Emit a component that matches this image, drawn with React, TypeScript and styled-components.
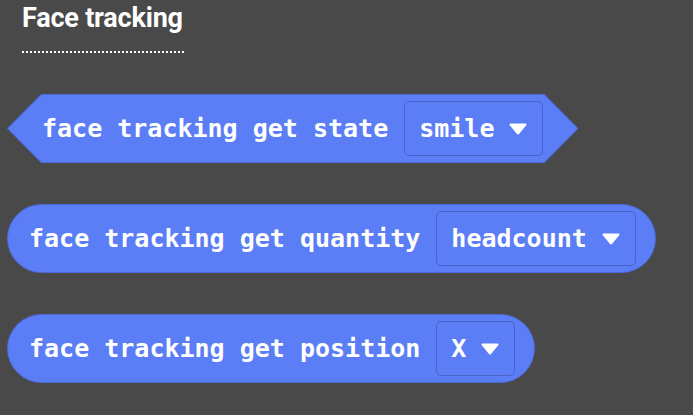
import React from "react";
import styled, { createGlobalStyle } from "styled-components";

const Global = createGlobalStyle`
  html, body { margin: 0; padding: 0; background: #4a4949; }
  body { width: 693px; height: 415px; overflow: hidden; }
`;

const Page = styled.div`
  display: flex;
  flex-direction: column;
  align-items: flex-start;
  padding: 2px 0 0 7px;
  box-sizing: border-box;
  width: 693px;
  height: 415px;
`;

const Heading = styled.div`
  margin-left: 15px;
  display: flex;
  flex-direction: column;
  align-items: flex-start;
`;

const Title = styled.h2`
  margin: 0;
  font-family: Roboto, "Noto Sans", sans-serif;
  font-weight: 700;
  font-size: 27px;
  line-height: 32px;
  color: #ffffff;
  letter-spacing: -0.2px;
`;

const Dots = styled.div`
  margin-top: 17px;
  width: 162px;
  height: 2px;
  background: repeating-linear-gradient(90deg, #ffffff 0 2px, transparent 2px 4px);
`;

const Stack = styled.div`
  display: flex;
  flex-direction: column;
  align-items: flex-start;
  gap: 41px;
  margin-top: 41px;
`;

const blockText = `
  font-family: "DejaVu Sans Mono", "Liberation Mono", monospace;
  font-weight: 700;
  font-size: 25px;
  color: #ffffff;
  white-space: pre;
`;

const HexOuter = styled.div`
  background: #4d69d6;
  clip-path: polygon(34px 0, calc(100% - 34px) 0, 100% 50%, calc(100% - 34px) 100%, 34px 100%, 0 50%);
  padding: 1px;
`;

const HexInner = styled.div`
  background: #5b7df5;
  clip-path: polygon(33.6px 0, calc(100% - 33.6px) 0, 100% 50%, calc(100% - 33.6px) 100%, 33.6px 100%, 0 50%);
  height: 67px;
  display: flex;
  align-items: center;
  gap: 16px;
  padding: 0 34px 0 34px;
  box-sizing: border-box;
  ${blockText}
`;

const Pill = styled.div`
  background: #5b7df5;
  border: 1px solid #4d69d6;
  border-radius: 35px;
  height: 69px;
  box-sizing: border-box;
  display: flex;
  align-items: center;
  gap: 16px;
  padding: 0 19px 0 21px;
  ${blockText}
`;

const Dropdown = styled.div`
  display: flex;
  align-items: center;
  gap: 15px;
  height: 55px;
  box-sizing: border-box;
  border: 1px solid #4862c8;
  border-radius: 5px;
  padding: 0 15px 0 14px;
  background: #5b7df5;
`;

const Caret = () => (
  <svg width="18" height="12" viewBox="0 0 18 12">
    <path d="M1.5 1.5 H16.5 L9 10.5 Z" fill="#ffffff" stroke="#ffffff" strokeWidth="2" strokeLinejoin="round" />
  </svg>
);

export default function App() {
  return (
    <>
      <Global />
      <Page>
        <Heading>
          <Title>Face tracking</Title>
          <Dots />
        </Heading>
        <Stack>
          <HexOuter>
            <HexInner>
              <span>face tracking get state</span>
              <Dropdown>
                <span>smile</span>
                <Caret />
              </Dropdown>
            </HexInner>
          </HexOuter>
          <Pill>
            <span>face tracking get quantity</span>
            <Dropdown>
              <span>headcount</span>
              <Caret />
            </Dropdown>
          </Pill>
          <Pill>
            <span>face tracking get position</span>
            <Dropdown>
              <span>X</span>
              <Caret />
            </Dropdown>
          </Pill>
        </Stack>
      </Page>
    </>
  );
}
